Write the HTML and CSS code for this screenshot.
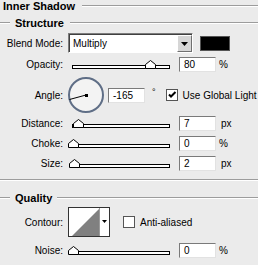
FILE: index.html
```html
<!DOCTYPE html>
<html>
<head>
<meta charset="utf-8">
<link rel="stylesheet" href="styles.css">
</head>
<body>
<div class="panel">
  <div class="title"><span class="head">Inner Shadow</span><i class="rule"></i></div>

  <div class="legend first"><i class="rule short"></i><span class="head">Structure</span><i class="rule"></i></div>

  <div class="row blend">
    <span class="lbl">Blend Mode:</span>
    <div class="select"><span class="sel-text">Multiply</span><span class="sel-btn"><svg width="7" height="4" viewBox="0 0 7 4"><path d="M0 0H7L3.5 4Z" fill="#000"/></svg></span></div>
    <div class="swatch"></div>
  </div>

  <div class="row field-row opacity">
    <span class="lbl">Opacity:</span>
    <div class="slider"><div class="track"></div><svg class="thumb" style="left:73px" width="11" height="9" viewBox="0 0 11 9"><path d="M0.5 8.5V4.5L5.5 0.5L10.5 4.5V8.5Z" fill="#fff" stroke="#000"/></svg></div>
    <div class="field">80</div><span class="unit">%</span>
  </div>

  <div class="row angle">
    <span class="lbl">Angle:</span>
    <div class="dial"><svg width="36" height="36" viewBox="0 0 36 36"><line x1="18" y1="18" x2="1.5" y2="22.5" stroke="#000" stroke-width="1"/><rect x="17" y="17" width="3" height="3" fill="#000"/></svg></div>
    <div class="field angle-field">-165</div><span class="deg">°</span>
    <span class="check"><svg width="12" height="12" viewBox="0 0 12 12"><rect x="0.5" y="0.5" width="11" height="11" fill="#fff" stroke="#555"/><path d="M3 5.5L5 7.5L9.5 3" fill="none" stroke="#000" stroke-width="2"/></svg></span>
    <span class="check-text">Use Global Light</span>
  </div>

  <div class="row field-row distance">
    <span class="lbl">Distance:</span>
    <div class="slider"><div class="track"></div><svg class="thumb" style="left:1px" width="11" height="9" viewBox="0 0 11 9"><path d="M0.5 8.5V4.5L5.5 0.5L10.5 4.5V8.5Z" fill="#fff" stroke="#000"/></svg></div>
    <div class="field">7</div><span class="unit px">px</span>
  </div>

  <div class="row field-row spaced">
    <span class="lbl">Choke:</span>
    <div class="slider"><div class="track"></div><svg class="thumb" style="left:-4px" width="11" height="9" viewBox="0 0 11 9"><path d="M0.5 8.5V4.5L5.5 0.5L10.5 4.5V8.5Z" fill="#fff" stroke="#000"/></svg></div>
    <div class="field">0</div><span class="unit">%</span>
  </div>

  <div class="row field-row spaced">
    <span class="lbl">Size:</span>
    <div class="slider"><div class="track"></div><svg class="thumb" style="left:-3px" width="11" height="9" viewBox="0 0 11 9"><path d="M0.5 8.5V4.5L5.5 0.5L10.5 4.5V8.5Z" fill="#fff" stroke="#000"/></svg></div>
    <div class="field">2</div><span class="unit px">px</span>
  </div>

  <div class="sep"></div>

  <div class="legend second"><i class="rule short"></i><span class="head">Quality</span><i class="rule"></i></div>

  <div class="row contour-row">
    <span class="lbl">Contour:</span>
    <div class="contour"><svg width="42" height="30" viewBox="0 0 42 30"><rect x="0.5" y="0.5" width="41" height="29" fill="#fff" stroke="#333"/><path d="M4 29L31 2V29Z" fill="#808080"/><line x1="31.5" y1="1" x2="31.5" y2="29" stroke="#9a9a9a"/><path d="M34 13H39L36.5 16Z" fill="#000"/></svg></div>
    <span class="check aa"><svg width="12" height="12" viewBox="0 0 12 12"><rect x="0.5" y="0.5" width="11" height="11" fill="#fff" stroke="#555"/></svg></span>
    <span class="check-text">Anti-aliased</span>
  </div>

  <div class="row field-row noise">
    <span class="lbl">Noise:</span>
    <div class="slider"><div class="track"></div><svg class="thumb" style="left:-4px" width="11" height="9" viewBox="0 0 11 9"><path d="M0.5 8.5V4.5L5.5 0.5L10.5 4.5V8.5Z" fill="#fff" stroke="#000"/></svg></div>
    <div class="field">0</div><span class="unit">%</span>
  </div>
</div>
</body>
</html>
```

FILE: styles.css
```css
html, body {
  margin: 0;
  padding: 0;
  background: #ebebeb;
}
body {
  width: 258px;
  height: 265px;
  overflow: hidden;
  font-family: "Liberation Sans", Arial, sans-serif;
  font-size: 10px;
  color: #000;
}
.panel {
  display: flex;
  flex-direction: column;
}
.head {
  font-weight: bold;
  font-size: 11px;
  line-height: 12px;
  white-space: nowrap;
}
.rule {
  flex: 1;
  height: 0;
  border-top: 1px solid #9c9c9c;
  border-bottom: 1px solid #fff;
}
.rule.short {
  flex: 0 0 10px;
}
.title {
  display: flex;
  align-items: center;
  height: 11px;
  padding-left: 3px;
}
.title .rule { margin-left: 7px; }
.legend {
  display: flex;
  align-items: center;
  height: 12px;
}
.legend .head { margin: 0 6px 0 5px; }
.legend.first { margin-top: 6px; }
.legend.second { margin-top: 11px; }
.legend.second .head { margin-right: 5px; }

.row {
  display: flex;
  align-items: center;
}
.lbl {
  width: 63px;
  flex: none;
  text-align: right;
  white-space: nowrap;
}
.blend { height: 20px; margin-top: 4px; }
.field-row { height: 15px; }
.opacity { margin-top: 4px; }
.angle { height: 36px; margin-top: 5px; }
.distance { margin-top: 3px; }
.spaced { margin-top: 5px; }
.contour-row { height: 30px; margin-top: 3px; }
.noise { margin-top: 6px; }

.select {
  margin-left: 5px;
  width: 125px;
  height: 20px;
  box-sizing: border-box;
  border: 1px solid;
  border-color: #7d7d7d #fff #fff #7d7d7d;
  box-shadow: inset 1px 1px 0 #404040;
  background: #fff;
  display: flex;
  align-items: center;
}
.sel-text {
  flex: 1;
  padding-left: 4px;
  padding-top: 1px;
}
.sel-btn {
  width: 15px;
  height: 17px;
  margin-top: 1px;
  box-sizing: border-box;
  background: #d6d6d6;
  border: 1px solid;
  border-color: #fff #707070 #707070 #fff;
  display: flex;
  align-items: center;
  justify-content: center;
}
.swatch {
  margin-left: 7px;
  width: 30px;
  height: 15px;
  background: #000;
  box-sizing: border-box;
  border: 1px solid #555;
}

.slider {
  position: relative;
  margin-left: 9px;
  width: 98px;
  height: 15px;
  flex: none;
}
.track {
  margin-top: 8px;
  height: 2px;
  border: 1px solid #000;
  background: #fff;
}
.thumb {
  position: absolute;
  top: 3px;
}
.field {
  margin-left: 9px;
  width: 37px;
  height: 15px;
  box-sizing: border-box;
  border: 1px solid;
  border-color: #7a7a7a #e2e2e2 #e2e2e2 #7a7a7a;
  background: #fff;
  padding-left: 4px;
  line-height: 13px;
  flex: none;
}
.unit { margin-left: 3px; }
.unit.px { margin-left: 5px; }

.dial {
  margin-left: 5px;
  width: 36px;
  height: 36px;
  box-sizing: border-box;
  border-radius: 50%;
  border: 2px solid #5f6e86;
  background: #f3f3f3;
  position: relative;
  flex: none;
}
.dial svg {
  position: absolute;
  left: -2px;
  top: -2px;
}
.angle-field { margin-left: 4px; }
.deg {
  margin-left: 7px;
  align-self: flex-start;
  margin-top: 10px;
  font-size: 9px;
}
.check {
  display: flex;
  margin-left: 10px;
}
.check.aa { margin-left: 13px; }
.check-text {
  margin-left: 5px;
  white-space: nowrap;
}
.contour {
  margin-left: 5px;
  display: flex;
}
.sep {
  margin-top: 8px;
  height: 0;
  border-top: 1px solid #9c9c9c;
  border-bottom: 1px solid #fff;
}
```
